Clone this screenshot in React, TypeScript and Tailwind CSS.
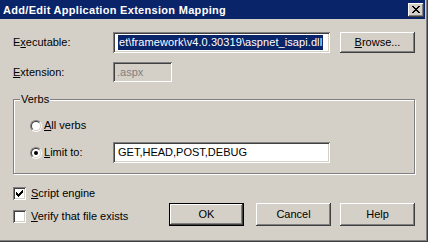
import React from "react";

const sunken =
  "shadow-[inset_1px_1px_#808080,inset_-1px_-1px_#ffffff,inset_2px_2px_#404040,inset_-2px_-2px_#d4d0c8]";
const raised =
  "shadow-[inset_-1px_-1px_#404040,inset_1px_1px_#ffffff,inset_-2px_-2px_#808080,inset_2px_2px_#d4d0c8]";

function Radio({ checked }: { checked?: boolean }) {
  return (
    <div className="w-[12px] h-[12px] rounded-full border border-t-[#808080] border-l-[#808080] border-b-white border-r-white flex">
      <div className="flex-1 rounded-full border border-t-[#404040] border-l-[#404040] border-b-[#d4d0c8] border-r-[#d4d0c8] bg-white flex items-center justify-center">
        {checked && <div className="w-[4px] h-[4px] rounded-full bg-black" />}
      </div>
    </div>
  );
}

function Check({ checked }: { checked?: boolean }) {
  return (
    <div className={`w-[13px] h-[13px] bg-white ${sunken} flex items-center justify-center`}>
      {checked && (
        <svg width="7" height="7" viewBox="0 0 7 7" shapeRendering="crispEdges">
          <path d="M0 2h1v1h-1zM0 3h2v1h-2zM0 4h3v1h-3zM1 5h2v1h-2zM2 6h1v1h-1zM3 3h1v3h-1zM4 2h1v3h-1zM5 1h1v3h-1zM6 0h1v3h-1z" fill="#000" />
        </svg>
      )}
    </div>
  );
}

function Button({ children, def, className = "" }: { children: React.ReactNode; def?: boolean; className?: string }) {
  if (def) {
    return (
      <div className={`w-[75px] h-[23px] border border-black flex ${className}`}>
        <div className={`flex-1 ${raised} flex items-center justify-center`}>{children}</div>
      </div>
    );
  }
  return (
    <div className={`w-[75px] h-[23px] ${raised} flex items-center justify-center ${className}`}>{children}</div>
  );
}

export default function App() {
  return (
    <div className="w-[428px] h-[242px] bg-[#d4d0c8] shadow-[inset_-1px_-1px_#404040,inset_-2px_-2px_#808080] flex flex-col font-['Liberation_Sans',Arial,sans-serif] text-[11px] text-black overflow-hidden leading-none">
      {/* title bar */}
      <div className="h-[19px] mr-[3px] bg-[#0a246a] flex items-center pl-[3px] pr-[1px]">
        <span className="flex-1 font-bold text-white text-[11px] tracking-[0.3px] pt-[1px]">Add/Edit Application Extension Mapping</span>
        <div className={`w-[16px] h-[14px] bg-[#d4d0c8] ${raised} flex items-center justify-center`}>
          <svg width="8" height="7" viewBox="0 0 8 7" shapeRendering="crispEdges">
            <path d="M0 0h2v1h-2zM6 0h2v1h-2zM1 1h2v1h-2zM5 1h2v1h-2zM2 2h4v1h-4zM3 3h2v1h-2zM2 4h4v1h-4zM1 5h2v1h-2zM5 5h2v1h-2zM0 6h2v1h-2zM6 6h2v1h-2z" fill="#000" />
          </svg>
        </div>
      </div>

      <div className="pl-[13px] pt-[13px] flex flex-col">
        {/* Executable */}
        <div className="flex items-center h-[21px]">
          <span className="w-[100px]">
            E<u className="underline-offset-[1px]">x</u>ecutable:
          </span>
          <div className={`w-[217px] h-[21px] bg-white ${sunken} flex items-center pl-[5px] pr-[3px] overflow-hidden`}>
            <span className="bg-[#0a246a] text-white h-[15px] flex items-center px-[1px] tracking-[0.08px] whitespace-nowrap">
              et\framework\v4.0.30319\aspnet_isapi.dll
            </span>
          </div>
          <div className={`ml-[10px] w-[75px] h-[21px] ${raised} flex items-center justify-center`}>
            <span>
              <u className="underline-offset-[1px]">B</u>rowse...
            </span>
          </div>
        </div>

        {/* Extension */}
        <div className="flex items-center h-[20px] mt-[9px]">
          <span className="w-[100px]">
            <u className="underline-offset-[1px]">E</u>xtension:
          </span>
          <div className={`w-[59px] h-[20px] bg-[#d4d0c8] ${sunken} flex items-center pl-[4px] text-[#808080]`}>
            .aspx
          </div>
        </div>

        {/* Verbs group */}
        <div className="relative mt-[17px] w-[402px] border border-[#808080] shadow-[inset_1px_1px_#ffffff,1px_1px_#ffffff] pl-[16px] pt-[19px] pb-[10px]">
          <span className="absolute left-[6px] top-[-6px] bg-[#d4d0c8] px-[1px]">Verbs</span>
          <div className="flex items-center h-[13px]">
            <Radio />
            <span className="ml-[2px]">
              <u className="underline-offset-[1px]">A</u>ll verbs
            </span>
          </div>
          <div className="flex items-center h-[21px] mt-[10px]">
            <div className="w-[83px] flex items-center">
              <Radio checked />
              <span className="ml-[2px]">
                <u className="underline-offset-[1px]">L</u>imit to:
              </span>
            </div>
            <div className={`w-[217px] h-[21px] bg-white ${sunken} flex items-center pl-[5px]`}>
              GET,HEAD,POST,DEBUG
            </div>
          </div>
        </div>

        {/* bottom */}
        <div className="flex mt-[13px]">
          <div className="w-[156px] flex flex-col">
            <div className="flex items-center h-[13px]">
              <Check checked />
              <span className="ml-[5px]">
                <u className="underline-offset-[1px]">S</u>cript engine
              </span>
            </div>
            <div className="flex items-center h-[13px] mt-[10px]">
              <Check />
              <span className="ml-[5px]">
                <u className="underline-offset-[1px]">V</u>erify that file exists
              </span>
            </div>
          </div>
          <div className="flex mt-[16px]">
            <Button def>OK</Button>
            <Button className="ml-[12px]">Cancel</Button>
            <Button className="ml-[9px]">Help</Button>
          </div>
        </div>
      </div>
    </div>
  );
}
